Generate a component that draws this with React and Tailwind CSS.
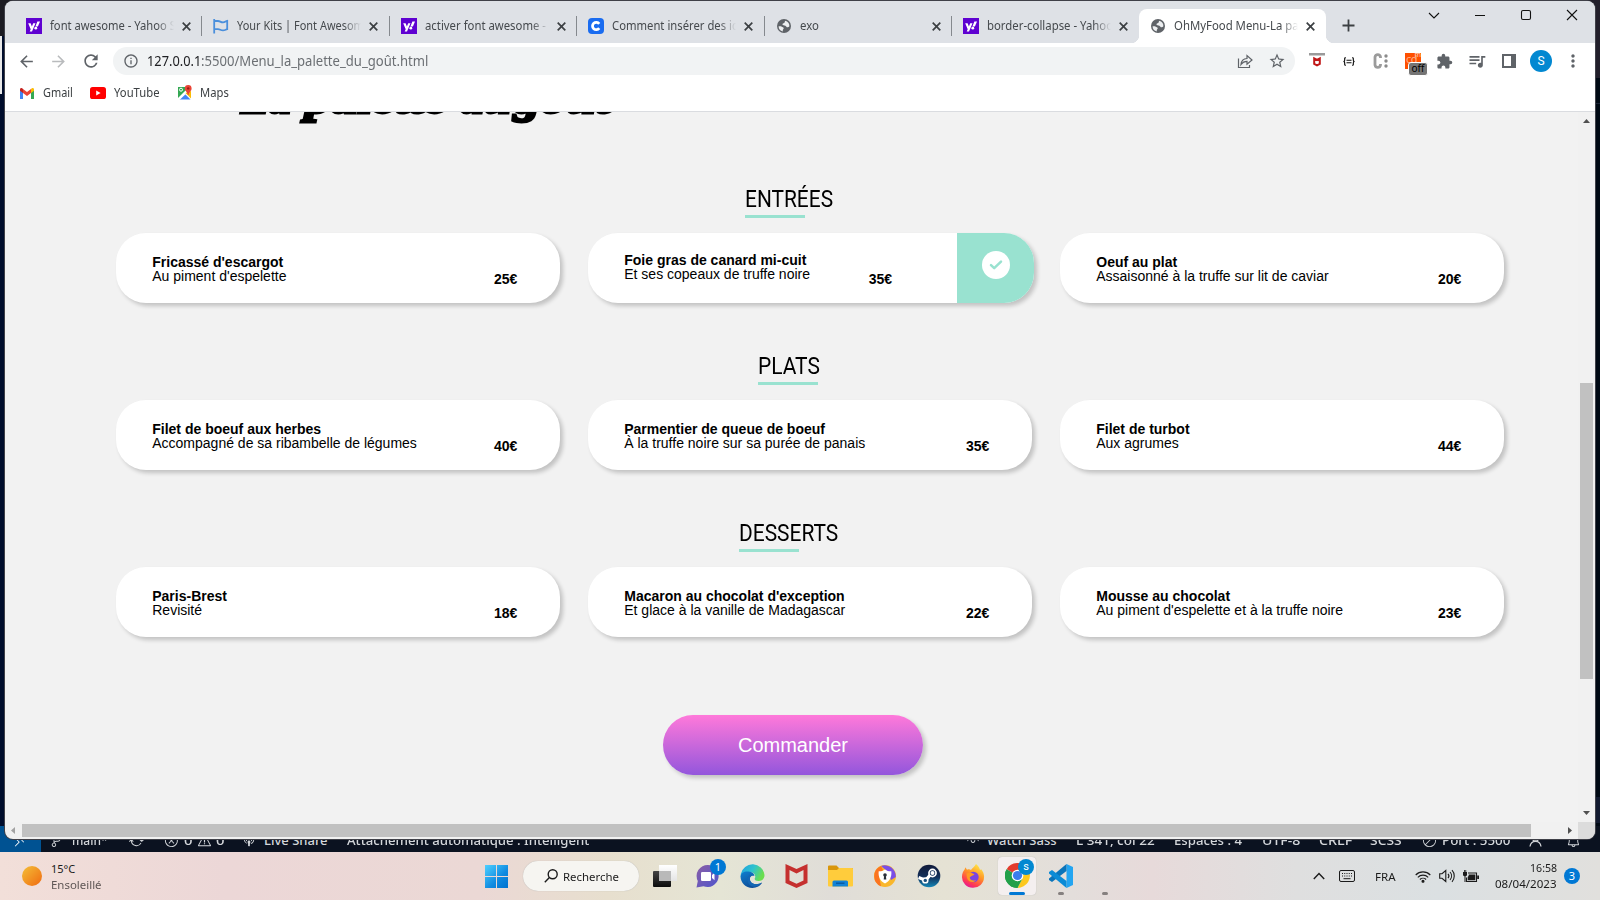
import React, { useLayoutEffect, useRef, useState } from "react";
import {
  MdArrowBack, MdArrowForward, MdRefresh, MdInfoOutline, MdStarBorder,
  MdExtension, MdQueueMusic, MdMoreVert,
} from "react-icons/md";
import {
  VscSourceControl, VscSync, VscError, VscWarning, VscBroadcast, VscEye,
  VscCircleSlash, VscBell, VscRemote,
} from "react-icons/vsc";

/* Text squeezed or stretched horizontally so that it fills a given width. */
function Fit({ w, className = "", children }) {
  const ref = useRef(null);
  const [scale, setScale] = useState(1);
  useLayoutEffect(() => {
    setScale(w / ref.current.offsetWidth);
  }, [w]);
  return (
    <span className={"inline-block shrink-0 whitespace-nowrap " + className} style={{ width: w }}>
      <span ref={ref} className="inline-block origin-left" style={{ transform: `scaleX(${scale})` }}>
        {children}
      </span>
    </span>
  );
}

function YahooIcon() {
  return (
    <svg width="16" height="16" viewBox="0 0 16 16">
      <rect width="16" height="16" fill="#5f01d1" />
      <path d="M2.2 5.2H4.6L5.9 8.4 7.2 5.2H9.5L6 13.6H3.7L4.7 11.2Z" fill="#fff" />
      <path d="M11.4 3.4H14L11.9 8.4H9.4Z" fill="#fff" />
      <circle cx="9.8" cy="10.2" r="1.4" fill="#fff" />
    </svg>
  );
}

function FlagIcon() {
  return (
    <svg width="16" height="16" viewBox="0 0 16 16" fill="none" stroke="#4a8fdc" strokeWidth="1.8">
      <path d="M1.2 1V15.6" />
      <path d="M1.2 3H5C7 3 7.6 4.4 10 4.4 12 4.4 12.6 3.2 14.2 2.8V11.2C12.6 11.6 12 12.4 10 12.4 7.6 12.4 7 11.2 5 11.2H1.2" />
    </svg>
  );
}

function CodeurIcon() {
  return (
    <svg width="16" height="16" viewBox="0 0 16 16">
      <rect width="16" height="16" rx="4" fill="#1a6cf0" />
      <path d="M11.2 5.8A3.7 3.7 0 1 0 11.2 10.2" fill="none" stroke="#fff" strokeWidth="2.8" />
    </svg>
  );
}

function GlobeIcon() {
  return (
    <svg width="16" height="16" viewBox="0 0 16 16">
      <circle cx="8" cy="8" r="7" fill="#5f6368" />
      <path d="M2.6 8.3C4.4 7.9 6.6 8.6 7.6 9.8 8.2 10.8 6.8 11.4 6.8 12.3V13.6C4.2 13 2.6 11 2.6 8.3Z" fill="#eceef0" />
      <path d="M9.2 2.8C12 3.4 13.5 5.6 13.4 8.2 12.4 9.8 10.8 9.4 10.2 8.4 9.4 7.4 7.6 7.8 6.6 6.8 6 5.8 7 5.2 8 5.2 8.8 5 8.6 3.6 9.2 2.8Z" fill="#eceef0" />
    </svg>
  );
}

const tabs = [
  { icon: <YahooIcon />, text: "font awesome - Yahoo S", w: 126, fade: true },
  { icon: <FlagIcon />, text: "Your Kits | Font Awesom", w: 127, fade: true },
  { icon: <YahooIcon />, text: "activer font awesome -", w: 121, fade: true },
  { icon: <CodeurIcon />, text: "Comment insérer des ic", w: 125, fade: true },
  { icon: <GlobeIcon />, text: "exo", w: 19 },
  { icon: <YahooIcon />, text: "border-collapse - Yahoo", w: 126, fade: true },
];

function TabBody({ icon, text, w, fade }) {
  return (
    <>
      <span className="w-4 h-4 shrink-0">{icon}</span>
      <span
        className={
          "ml-2 w-[124px] overflow-hidden flex " +
          (fade ? "[mask-image:linear-gradient(to_right,black_86%,transparent_100%)]" : "")
        }
      >
        <Fit w={w}>{text}</Fit>
      </span>
      <svg className="ml-[8px] shrink-0" width="9" height="9" viewBox="0 0 9 9" fill="none" stroke="#3c4043" strokeWidth="1.7">
        <path d="M.7 .7L8.3 8.3M8.3 .7L.7 8.3" />
      </svg>
    </>
  );
}

function TabStrip() {
  return (
    <div className="h-[42px] bg-[#dee1e6] flex pl-[9px] text-[12px] text-[#45494d] shrink-0">
      {tabs.map((t, i) => (
        <div key={i} className="w-[187.5px] shrink-0 h-full flex items-center pt-[8px] pl-[11.5px] relative">
          <TabBody {...t} />
          {i < 5 && <span className="absolute right-[-0.5px] top-[15px] w-px h-5 bg-[#85898e]" />}
        </div>
      ))}
      <div className="relative w-[187px] shrink-0 mt-2 h-[34px] bg-white rounded-t-lg flex items-center pl-[10.5px]">
        <TabBody icon={<GlobeIcon />} text="OhMyFood Menu-La pa" w={125} fade />
        <span className="absolute -left-2 bottom-0 w-2 h-2 bg-[radial-gradient(circle_at_0_0,transparent_8px,white_8.5px)]" />
        <span className="absolute -right-2 bottom-0 w-2 h-2 bg-[radial-gradient(circle_at_100%_0,transparent_8px,white_8.5px)]" />
      </div>
      <svg className="ml-[16px] mt-[18px] shrink-0" width="13" height="13" viewBox="0 0 13 13" stroke="#3c4043" strokeWidth="1.8">
        <path d="M6.5 .5V12.5M.5 6.5H12.5" />
      </svg>
      <svg className="ml-[69px] mt-[7px] shrink-0" width="156" height="14" viewBox="0 0 156 14" fill="none" stroke="#111" strokeWidth="1.1">
        <path d="M5 5L10 10 15 5" />
        <path d="M51 7.5H61" />
        <rect x="97.5" y="2.5" width="9" height="9" rx="1.5" />
        <path d="M143 2L153 12M153 2L143 12" />
      </svg>
    </div>
  );
}

function Toolbar() {
  return (
    <div className="h-9 bg-white flex items-center shrink-0 text-[#5f6368]">
      <MdArrowBack size={19} className="ml-[12px] shrink-0" />
      <MdArrowForward size={19} className="ml-[13px] shrink-0 text-[#b9bbbd]" />
      <MdRefresh size={20} className="ml-[13px] shrink-0" />
      <div className="ml-[12px] w-[1182px] shrink-0 h-7 rounded-full bg-[#f1f3f4] flex items-center">
        <MdInfoOutline size={16} className="ml-[10px] shrink-0" />
        <div className="ml-[8px] text-[14px] leading-5 flex text-[#6b6f73] flex-1">
          <Fit w={54} className="text-[#202124]">127.0.0.1</Fit>
          <Fit w={227}>:5500/Menu_la_palette_du_goût.html</Fit>
        </div>
        <svg width="16" height="16" viewBox="0 0 16 16" fill="none" stroke="#5f6368" strokeWidth="1.2">
          <path d="M1.5 5.5V14.5H12.5V12" />
          <path d="M4 11.5C4.3 8 6.3 5.7 10 5.5V2.5L15 7 10 11.3V8.4C7.3 8.4 5.5 9.4 4 11.5Z" />
        </svg>
        <MdStarBorder size={18} className="ml-[15px] mr-[9px]" />
      </div>
      <svg className="ml-[14px] shrink-0" width="16" height="18" viewBox="0 0 16 18">
        <rect y="1" width="16" height="2.5" fill="#9a9a9a" />
        <path d="M5.2 6.5L8 8 10.8 6.5V12L8 13.4 5.2 12Z" fill="none" stroke="#c01818" strokeWidth="2" />
      </svg>
      <svg className="ml-[17px] shrink-0" width="14" height="9" viewBox="0 0 14 10" fill="none" stroke="#111" strokeWidth="1.3">
        <path d="M3.6 .8H3Q2.2 .8 2.2 1.8V3.6Q2.2 5 .8 5 2.2 5 2.2 6.4V8.2Q2.2 9.2 3 9.2H3.6M10.4 .8H11Q11.8 .8 11.8 1.8V3.6Q11.8 5 13.2 5 11.8 5 11.8 6.4V8.2Q11.8 9.2 11 9.2H10.4" />
        <path d="M4.2 3.6H9.8M4.2 6.4H9.8" />
      </svg>
      <svg className="ml-[17px] shrink-0" width="16" height="18" viewBox="0 0 16 18">
        <path d="M7.5 6V5A2.8 3 0 0 0 2 5V13A2.8 3 0 0 0 7.5 13V12" fill="none" stroke="#9b9b9b" strokeWidth="2.8" />
        <circle cx="13" cy="4" r="1.7" fill="#8b8b8b" />
        <circle cx="13" cy="9" r="1.7" fill="#8b8b8b" />
        <circle cx="13" cy="14" r="1.7" fill="#8b8b8b" />
      </svg>
      <span className="relative ml-[16px] w-4 h-4 bg-[#ff5000] shrink-0">
        <span className="absolute left-px top-0 text-[11px] leading-[11px] tracking-[-0.5px] text-[#ffb08a]">cd</span>
        <span className="absolute right-0 top-[-2px] text-[7px] leading-[8px] text-[#ffd8c4]">m</span>
        <span className="absolute left-[3px] top-[9px] w-[18px] h-[12px] rounded-[3px] bg-[#757575] border border-white text-black text-[10px] leading-[11px] text-center box-content">
          off
        </span>
      </span>
      <MdExtension size={17} className="ml-[15px] shrink-0" />
      <MdQueueMusic size={20} className="ml-[14px] shrink-0" />
      <svg className="ml-[15px] shrink-0" width="14" height="14" viewBox="0 0 14 14">
        <path d="M0 0H14V14H0ZM2 2V12H9V2Z" fill="#5f6368" fillRule="evenodd" />
      </svg>
      <span className="ml-[14px] w-[22px] h-[22px] rounded-full bg-[#0288d1] text-white text-[12px] leading-[22px] text-center shrink-0 font-[Roboto,sans-serif]">S</span>
      <MdMoreVert size={20} className="ml-[11px] shrink-0" />
    </div>
  );
}

function Bookmarks() {
  return (
    <div className="h-[33px] bg-white border-b border-[#dadce0] flex items-center pb-[4px] text-[12px] text-[#3c4043] shrink-0">
      <svg className="ml-[15px]" width="14" height="11" viewBox="0 0 14 11">
        <path d="M0 1.5V11H3V4Z" fill="#4285f4" />
        <path d="M14 1.5V11H11V4Z" fill="#34a853" />
        <path d="M3 1L7 4 11 1V5L7 8 3 5Z" fill="#ea4335" />
        <path d="M0 1.5C0 0 1.8-.5 3 1V5L0 2.8Z" fill="#c5221f" />
        <path d="M14 1.5C14 0 12.2-.5 11 1V5L14 2.8Z" fill="#fbbc04" />
      </svg>
      <Fit w={30} className="ml-[9px]">Gmail</Fit>
      <svg className="ml-[17px]" width="16" height="12" viewBox="0 0 16 12">
        <rect width="16" height="12" rx="2.6" fill="#f00" />
        <path d="M6.2 3.4V8.6L10.6 6Z" fill="#fff" />
      </svg>
      <Fit w={46} className="ml-[8px]">YouTube</Fit>
      <svg className="ml-[17px] -mt-px" width="16" height="16" viewBox="0 0 16 16">
        <path d="M1 2H13V8L7 9 1 15Z" fill="#34a853" />
        <path d="M1.5 14.5L7.5 8.5 13.5 14.5Z" fill="#4285f4" />
        <path d="M1 13L11 3 13 5 2.5 15H1Z" fill="#fff" />
        <path d="M8.5 8L14 13.5V6Z" fill="#fbbc04" />
        <circle cx="4" cy="4.7" r="1.5" fill="none" stroke="#fff" />
        <path d="M11.2 0A3.4 3.4 0 0 1 14.6 3.4C14.6 6 12 6.5 11.6 10H10.9C10.4 6.5 7.8 6 7.8 3.4A3.4 3.4 0 0 1 11.2 0Z" fill="#ea4335" />
        <circle cx="11.2" cy="3.4" r="1.2" fill="#9c1c12" />
      </svg>
      <Fit w={29} className="ml-[7px]">Maps</Fit>
    </div>
  );
}

const sections = [
  {
    title: "ENTRÉES", w: 88,
    items: [
      ["Fricassé d'escargot", "Au piment d'espelette", "25€"],
      ["Foie gras de canard mi-cuit", "Et ses copeaux de truffe noire", "35€", true],
      ["Oeuf au plat", "Assaisonné à la truffe sur lit de caviar", "20€"],
    ],
  },
  {
    title: "PLATS", w: 62,
    items: [
      ["Filet de boeuf aux herbes", "Accompagné de sa ribambelle de légumes", "40€"],
      ["Parmentier de queue de boeuf", "À la truffe noire sur sa purée de panais", "35€"],
      ["Filet de turbot", "Aux agrumes", "44€"],
    ],
  },
  {
    title: "DESSERTS", w: 99.5,
    items: [
      ["Paris-Brest", "Revisité", "18€"],
      ["Macaron au chocolat d'exception", "Et glace à la vanille de Madagascar", "22€"],
      ["Mousse au chocolat", "Au piment d'espelette et à la truffe noire", "23€"],
    ],
  },
];

function Dish({ name, detail, price, selected }) {
  return (
    <div
      className={
        "h-[70px] rounded-[30px] bg-white flex overflow-hidden shadow-[3px_3px_4px_rgba(0,0,0,0.2)] text-[14px] leading-[14px] text-black " +
        (selected ? "w-[446px]" : "w-[444px]")
      }
    >
      <div className={"pl-[36.25px] flex-1 " + (selected ? "pt-5" : "pt-[22px]")}>
        <p className="font-bold">{name}</p>
        <p>{detail}</p>
      </div>
      <p className={"font-bold pt-[39px] " + (selected ? "mr-[65px]" : "mr-[42.6px]")}>{price}</p>
      {selected && (
        <div className="w-[77px] bg-[#99e2d0] flex justify-center pt-[18px]">
          <svg width="28" height="28" viewBox="0 0 28 28">
            <circle cx="14" cy="14" r="14" fill="#fff" />
            <path d="M9 14.2L12.2 17.2 19 10.6" fill="none" stroke="#99e2d0" strokeWidth="2.5" strokeLinecap="round" strokeLinejoin="round" />
          </svg>
        </div>
      )}
    </div>
  );
}

function Page() {
  return (
    <div className="w-[1573px] h-full flex flex-col font-['Liberation_Sans',Arial,sans-serif]">
      <h1 className="h-[72px] shrink-0 overflow-hidden pl-[236px] text-black">
        <span className="-mt-[39px] flex text-[43px] leading-[52px] font-bold italic font-['Liberation_Serif',serif] [-webkit-text-stroke:3px_black]">
          <Fit w={50}>La</Fit>
          <Fit w={142} className="ml-[14px]">palette</Fit>
          <Fit w={50} className="ml-[13px]">du</Fit>
          <Fit w={96} className="ml-[4px]">goût</Fit>
        </span>
      </h1>
      {sections.map((s) => (
        <section key={s.title} className="h-[167px] w-[1568px] shrink-0 flex flex-col items-center">
          <h2 className="flex flex-col text-black text-[24px] leading-[30px] font-['Roboto',sans-serif]">
            <Fit w={s.w}>{s.title}</Fit>
            <span className="mt-px w-[60px] h-[3px] bg-[#99e2d0]" />
          </h2>
          <div className="mt-[15px] w-full pl-[111px] grid grid-cols-[444px_444px_444px] gap-7">
            {s.items.map(([name, detail, price, selected]) => (
              <Dish key={name} name={name} detail={detail} price={price} selected={selected} />
            ))}
          </div>
        </section>
      ))}
      <button className="ml-[658px] mt-[30px] w-[260px] h-[60px] shrink-0 rounded-[30px] bg-[linear-gradient(#ff79da,#9356dc)] text-white text-[20px] leading-[60px] text-center shadow-[3px_3px_4px_rgba(0,0,0,0.2)]">
        Commander
      </button>
    </div>
  );
}

function BrowserWindow() {
  return (
    <div className="absolute left-[5px] top-px w-[1590px] h-[838px] rounded-lg overflow-hidden bg-[#f1f1f1] flex flex-col shadow-[0_0_0_1px_#3f4048]">
      <TabStrip />
      <Toolbar />
      <Bookmarks />
      <div className="flex-1 min-h-0 flex bg-[#f2f2f2]">
        <Page />
        <div className="w-[17px] bg-[#f1f1f1] flex flex-col items-center">
          <svg className="mt-[7px] shrink-0" width="7" height="4" viewBox="0 0 7 4"><path d="M0 4L3.5 0 7 4Z" fill="#505050" /></svg>
          <div className="mt-[260px] w-[13px] h-[296px] shrink-0 bg-[#c1c1c1]" />
          <svg className="mt-[132px] shrink-0" width="7" height="4" viewBox="0 0 7 4"><path d="M0 0L3.5 4 7 0Z" fill="#505050" /></svg>
        </div>
      </div>
      <div className="h-[17px] shrink-0 flex items-center">
        <svg className="ml-[6px]" width="4" height="7" viewBox="0 0 4 7"><path d="M4 0L0 3.5 4 7Z" fill="#a3a3a3" /></svg>
        <div className="ml-[7px] w-[1509px] h-[13px] bg-[#c1c1c1]" />
        <svg className="ml-[37px]" width="4" height="7" viewBox="0 0 4 7"><path d="M0 0L4 3.5 0 7Z" fill="#505050" /></svg>
        <div className="ml-auto w-[17px] h-full bg-[#dcdcdc]" />
      </div>
    </div>
  );
}

function StatusBar() {
  return (
    <div className="h-[26px] bg-[#0b1220] text-[#d3d6da] text-[13px] leading-[26px] flex items-center shrink-0">
      <span className="w-[41px] h-full bg-[#005292] flex items-center pl-3 pt-[2px]"><VscRemote size={15} className="text-white" /></span>
      <div className="flex-1 h-full flex items-center pt-[2px] font-medium">
        <VscSourceControl size={14} className="ml-[9px]" />
        <Fit w={36} className="ml-[8px]">main*</Fit>
        <VscSync size={15} className="ml-[21px]" />
        <VscError size={15} className="ml-[20px]" />
        <Fit w={8} className="ml-[5px]">0</Fit>
        <VscWarning size={15} className="ml-[5px]" />
        <Fit w={8} className="ml-[4px]">0</Fit>
        <VscBroadcast size={14} className="ml-[18px]" />
        <Fit w={64} className="ml-[8px]">Live Share</Fit>
        <Fit w={242} className="ml-[19px]">Attachement automatique : Intelligent</Fit>
        <VscEye size={14} className="ml-[377px]" />
        <Fit w={70} className="ml-[7px]">Watch Sass</Fit>
        <Fit w={79} className="ml-[19px]">L 341, col 22</Fit>
        <Fit w={68} className="ml-[19px]">Espaces : 4</Fit>
        <Fit w={38} className="ml-[20px]">UTF-8</Fit>
        <Fit w={33} className="ml-[19px]">CRLF</Fit>
        <Fit w={32} className="ml-[18px]">SCSS</Fit>
        <VscCircleSlash size={15} className="ml-[20px]" />
        <Fit w={68} className="ml-[5px]">Port : 5500</Fit>
        <svg className="ml-[19px]" width="13" height="15" viewBox="0 0 13 15" fill="none" stroke="#cfd2d6" strokeWidth="1.3">
          <circle cx="6.5" cy="4.5" r="3.5" /><path d="M1 13.5C1.5 10 3.5 8.3 6.5 8.3S11.5 10 12 13.5" />
        </svg>
        <VscBell size={15} className="ml-auto mr-[19px]" />
      </div>
    </div>
  );
}

function Badge({ children, className = "" }) {
  return (
    <span className={"absolute w-4 h-4 rounded-full text-white text-[11px] leading-4 text-center " + className}>
      {children}
    </span>
  );
}

function TaskIcons() {
  return (
    <>
      <svg className="ml-[13px] shrink-0" width="26" height="24" viewBox="0 0 26 24">
        <defs>
          <linearGradient id="tvd" x1="0" y1="0" x2="0" y2="1"><stop offset="0" stopColor="#444" /><stop offset="1" stopColor="#0c0c0c" /></linearGradient>
          <linearGradient id="tvl" x1="0" y1="0" x2="0" y2="1"><stop offset="0" stopColor="#fff" /><stop offset="1" stopColor="#e4e4e4" /></linearGradient>
        </defs>
        <rect x="7" y="1" width="18" height="16" fill="url(#tvl)" />
        <rect x="1" y="7" width="18" height="16" rx="1" fill="url(#tvd)" />
        <path d="M7 7H19V17H7Z" fill="#b9b9b9" />
      </svg>
      <span className="relative ml-[18px] w-6 h-6 shrink-0">
        <svg width="24" height="24" viewBox="0 0 24 24">
          <defs><linearGradient id="chat" x1="0" y1="0" x2="1" y2="1"><stop offset="0" stopColor="#8a5ea6" /><stop offset="1" stopColor="#4f55cd" /></linearGradient></defs>
          <path d="M12 1A11 11 0 1 1 7.5 22.2L.5 23.5 1.8 17A11 11 0 0 1 12 1Z" fill="url(#chat)" />
          <rect x="5" y="8" width="10" height="9" rx="1.3" fill="#fff" />
          <path d="M16 11L18.5 8.7V16.3L16 14Z" fill="#fff" />
        </svg>
        <Badge className="left-[14px] -top-[5px] bg-[#0078d4]">1</Badge>
      </span>
      <svg className="ml-[20px] shrink-0" width="25" height="24" viewBox="0 0 24 24">
        <defs>
          <linearGradient id="edA" x1="0" y1="0" x2="1" y2="0.4"><stop offset="0" stopColor="#1f9fe0" /><stop offset="0.55" stopColor="#2fc3cd" /><stop offset="1" stopColor="#6ade4e" /></linearGradient>
          <linearGradient id="edB" x1="0" y1="0" x2="0.6" y2="1"><stop offset="0" stopColor="#0f7fd0" /><stop offset="1" stopColor="#0e4a94" /></linearGradient>
        </defs>
        <path d="M.3 10A12 12 0 0 1 24 11C24 15 21.4 17 18 17 15 17 13.6 15.5 14.4 14.3 15.6 12.4 14 8 9.4 8 5 8 .6 9.5.3 14Z" fill="url(#edA)" />
        <path d="M.1 12.5C.4 9 4 7 8 7.6 12 8 14 10 13.9 12 10.6 11 8.6 13.4 9.6 16.4 11 20.4 16.6 21.4 21.6 18.6 20 22 16 24 12 24 5 24 0 18.6.1 12.5Z" fill="url(#edB)" />
        <path d="M9.6 10.6C6.4 12.6 6 18.4 9.8 21.6 13 24 18 23 21.6 18.6 16.6 21.4 11 20.4 9.6 16.4 8.8 13.6 10 12 12.4 11.6Z" fill="#1466b4" />
      </svg>
      <svg className="ml-[20px] shrink-0" width="23" height="24" viewBox="0 0 22 24">
        <path d="M0 0L11 5 22 0V19L11 24 0 19ZM4 6V16.5L11 19.8 18 16.5V6L11 9.6Z" fill="#c5302f" fillRule="evenodd" />
      </svg>
      <svg className="ml-[20px] shrink-0" width="25" height="22" viewBox="0 0 25 22">
        <path d="M0 1.5Q0 .5 1 .5H8.5L11 3H24Q25 3 25 4V10H0Z" fill="#d9960c" />
        <path d="M0 5H9L11 3H24Q25 3 25 4V20.5Q25 21.5 24 21.5H1Q0 21.5 0 20.5Z" fill="#ffcc3c" />
        <path d="M4.5 21.5V17Q4.5 15.5 6 15.5H18.5Q20 15.5 20 17V21.5Z" fill="#1283d6" />
        <path d="M8 18.2H16.5" stroke="#0a57a0" strokeWidth="1.4" />
      </svg>
      <svg className="ml-[20px] shrink-0" width="24" height="24" viewBox="0 0 24 24">
        <circle cx="12" cy="12" r="11" fill="#f9b72c" />
        <path d="M8 2A11 11 0 0 1 22.8 13L18 16 14 7Z" fill="#7b4ee6" />
        <path d="M8 2A11 11 0 0 0 8 22.3L6 12 10 6Z" fill="#fb7420" />
        <path d="M12 5.5C14 7 16.5 7.5 18.3 7.3 19 13 16.5 17.5 12 19.5 7.5 17.5 5 13 5.7 7.3 7.5 7.5 10 7 12 5.5Z" fill="#fff" />
        <circle cx="12" cy="11" r="1.8" fill="#2a2f3a" /><path d="M11.2 11.5H12.8L13.3 15.5H10.7Z" fill="#2a2f3a" />
      </svg>
      <svg className="ml-[20px] shrink-0" width="24" height="24" viewBox="0 0 24 24">
        <defs><linearGradient id="steam" x1="0" y1="0" x2="0" y2="1"><stop offset="0" stopColor="#111a3a" /><stop offset="0.55" stopColor="#12305a" /><stop offset="1" stopColor="#1387b8" /></linearGradient></defs>
        <circle cx="12" cy="12" r="11.3" fill="url(#steam)" />
        <path d="M1.6 13.6L8 16M8.5 16.5L14 10" stroke="#fff" strokeWidth="3.2" />
        <circle cx="8.3" cy="16.4" r="3.2" fill="#fff" /><circle cx="8.3" cy="16.4" r="1.7" fill="#1a4d7c" />
        <circle cx="15.5" cy="9" r="4.4" fill="#fff" /><circle cx="15.5" cy="9" r="2.7" fill="#12305a" /><circle cx="15.5" cy="9" r="2" fill="#fff" />
      </svg>
      <svg className="ml-[20px] shrink-0" width="24" height="24" viewBox="0 0 24 24">
        <defs><linearGradient id="fox" x1="0.8" y1="0" x2="0.3" y2="1"><stop offset="0" stopColor="#fff04a" /><stop offset="0.45" stopColor="#ff9426" /><stop offset="0.8" stopColor="#ff3b52" /><stop offset="1" stopColor="#e3169a" /></linearGradient></defs>
        <path d="M15 0C17.5 2 18.5 4 19 6 20 5.6 20 5 20 5 22.6 8 23.3 11 23 13.5A11 10.6 0 0 1 1 13C1 9.5 2 7.5 3.6 5.4L4.4 3.2 6 5.8C8 5 9 5.4 10 6 11 4 13.4 3 15 0Z" fill="url(#fox)" />
        <circle cx="12.4" cy="13" r="5.3" fill="#7a45e0" />
        <path d="M5.5 9.5C8 8.2 11 8.4 13.5 10.3 12 12 10 11.8 8.7 13.5 9 16 12 17.5 15 16 13 19.5 6.5 18.5 5.8 13Z" fill="#ff9a22" />
      </svg>
      <span className="relative ml-[13px] w-[38px] h-[38px] rounded-[4px] bg-[#f4efef] shrink-0 flex flex-col items-center pt-[6px] shadow-[0_0_1px_#aaa]">
        <svg width="25" height="25" viewBox="0 0 24 24">
          <path d="M12 12L1.6 6A12 12 0 0 1 22.4 6Z" fill="#e33b2e" />
          <path d="M12 12V24A12 12 0 0 1 1.6 6Z" fill="#22a04a" />
          <path d="M12 6.5H22.6A12 12 0 0 1 12 24L17 14.5Z" fill="#fcc81e" />
          <path d="M1.6 6L7.2 14.8 12 17.5 16.8 14.8 12 24A12 12 0 0 1 1.6 6Z" fill="#22a04a" />
          <circle cx="12" cy="12" r="5.6" fill="#fff" /><circle cx="12" cy="12" r="4.4" fill="#3b7ded" />
        </svg>
        <Badge className="left-[20px] top-[2px] bg-[#0288d1] font-[Roboto,sans-serif]">s</Badge>
        <span className="absolute bottom-0 w-4 h-[3px] rounded-full bg-[#0078d4]" />
      </span>
      <span className="relative ml-[13px] w-6 h-6 shrink-0">
        <svg width="24" height="24" viewBox="0 0 24 24">
          <path d="M17.5 0L24 3V21L17.5 24Z" fill="#23a5f1" />
          <path d="M17.5 0V7L3 18 0 16V14.6Z" fill="#0a74ba" />
          <path d="M17.5 24V17L3 6 0 8V9.4Z" fill="#0b8bd6" />
        </svg>
        <span className="absolute left-[9px] top-[28px] w-[6px] h-[3px] rounded-full bg-[#85807f]" />
        <span className="absolute left-[53px] top-[28px] w-[6px] h-[3px] rounded-full bg-[#85807f]" />
      </span>
    </>
  );
}

function Taskbar() {
  return (
    <div className="h-12 shrink-0 flex items-center text-[11px] text-[#1b1b1b] bg-[linear-gradient(90deg,#f2dfd9_0%,#ecd7d7_14%,#ebd8d5_30%,#e7dfce_38%,#e5e5d5_45%,#e0ddd8_52%,#e5e2d4_59%,#e3dedb_67%,#e7dada_72%,#dfdfdf_81%,#dbe0e2_90%,#e1e0dd_100%)]">
      <span className="ml-[22px] w-5 h-5 rounded-full bg-[linear-gradient(135deg,#f4bf38,#f06a10)] shrink-0" />
      <div className="ml-[9px] w-[52px] flex flex-col leading-4 pt-px">
        <Fit w={24}>15°C</Fit>
        <Fit w={51} className="text-[#5f5756]">Ensoleillé</Fit>
      </div>
      <svg className="ml-[382px] shrink-0" width="23" height="23" viewBox="0 0 23 23">
        <defs><linearGradient id="win" gradientUnits="userSpaceOnUse" x1="0" y1="0" x2="23" y2="23"><stop offset="0" stopColor="#4fd0ff" /><stop offset="0.6" stopColor="#0f8ae0" /><stop offset="1" stopColor="#0072cf" /></linearGradient></defs>
        <path d="M0 0H11V11H0ZM12 0H23V11H12ZM0 12H11V23H0ZM12 12H23V23H12Z" fill="url(#win)" />
      </svg>
      <div className="ml-[15px] w-[116px] h-[30px] rounded-full bg-[#f6f5f1] shadow-[0_0_1px_#aaa] flex items-center shrink-0">
        <svg className="ml-[21px]" width="14" height="14" viewBox="0 0 14 14" fill="none" stroke="#1b1b1b" strokeWidth="1.4">
          <circle cx="8.7" cy="5.3" r="4.5" /><path d="M5.4 8.6L.8 13.2" />
        </svg>
        <Fit w={56} className="ml-[5px] pt-[2px]">Recherche</Fit>
      </div>
      <TaskIcons />
      <svg className="ml-[240px] shrink-0" width="12" height="8" viewBox="0 0 12 8" fill="none" stroke="#1b1b1b" strokeWidth="1.4"><path d="M.8 7L6 1.5 11.2 7" /></svg>
      <svg className="ml-[14px] shrink-0" width="16" height="12" viewBox="0 0 16 12" fill="none" stroke="#1b1b1b">
        <rect x=".5" y=".5" width="15" height="11" rx="1.5" />
        <path d="M3 3.5H13M3 6H13" strokeDasharray="1 1.25" /><path d="M4.5 8.7H11.5" />
      </svg>
      <Fit w={21} className="ml-[20px] pt-[2px]">FRA</Fit>
      <svg className="ml-[19px] shrink-0" width="16" height="13" viewBox="0 0 16 13" fill="none" stroke="#1b1b1b" strokeWidth="1.1">
        <path d="M.7 5A10.2 10.2 0 0 1 15.3 5M2.8 7.3A7.3 7.3 0 0 1 13.2 7.3M4.9 9.5A4.4 4.4 0 0 1 11.1 9.5" />
        <circle cx="8" cy="11.3" r="1" fill="#1b1b1b" />
      </svg>
      <svg className="ml-[8px] shrink-0" width="17" height="14" viewBox="0 0 17 14" fill="none" stroke="#1b1b1b" strokeWidth="1.1">
        <path d="M.7 4.7H3L6.8 1.5V12.5L3 9.3H.7Z" />
        <path d="M9 4.8A3.4 3.4 0 0 1 9 9.2M11 3A6 6 0 0 1 11 11M13 1.2A8.6 8.6 0 0 1 13 12.8" />
      </svg>
      <svg className="ml-[7px] shrink-0" width="16" height="13" viewBox="0 0 16 13">
        <path d="M1 0V2H0V5Q0 6 1.5 6.2V12H2.5V6.2Q4 6 4 5V2H3.2V0H2.4V2H1.8V0Z" fill="#1b1b1b" />
        <path d="M5 3H13.5V11.5H3.5V7.5" fill="none" stroke="#1b1b1b" strokeWidth="1.1" />
        <path d="M5.8 4.5H12.3V10.2H4.7V7Q5.8 6 5.8 4.5ZM14.2 5.5H16V9H14.2Z" fill="#1b1b1b" />
      </svg>
      <div className="ml-auto flex flex-col items-end leading-4">
        <Fit w={27}>16:58</Fit>
        <Fit w={62}>08/04/2023</Fit>
      </div>
      <span className="ml-[7px] mr-5 w-4 h-4 rounded-full bg-[#0078d4] text-white leading-4 text-center shrink-0">3</span>
    </div>
  );
}

export default function App() {
  return (
    <div className="relative w-[1600px] h-[900px] overflow-hidden flex flex-col font-['Noto_Sans','Open_Sans',sans-serif]">
      <div className="flex-1 flex justify-between">
        <div className="w-5 flex flex-col bg-[#000d2c]">
          <div className="h-9 bg-[#1b1b22]" />
          <div className="h-[58px] w-[2px] bg-[#e8e8e8]" />
        </div>
        <div className="flex-1 bg-[#2b2b33]" />
        <div className="w-5 flex flex-col bg-[#000914]">
          <div className="h-[78px] bg-[#221f2b]" />
          <div className="h-[26px] border-b border-[#1c2436]" />
          <div className="mt-auto h-[26px] mb-[3px] bg-[#121a30]" />
        </div>
      </div>
      <StatusBar />
      <Taskbar />
      <BrowserWindow />
    </div>
  );
}
